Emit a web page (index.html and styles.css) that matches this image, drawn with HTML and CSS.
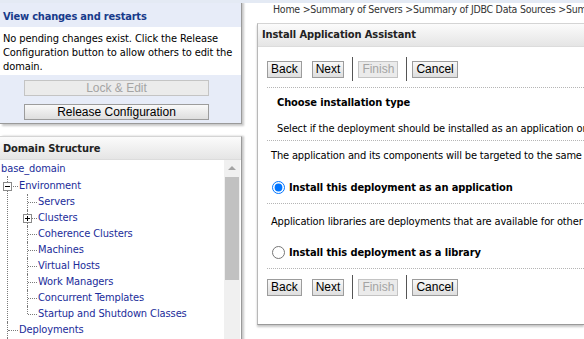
FILE: index.html
```html
<!DOCTYPE html>
<html lang="en">
<head>
    <meta charset="UTF-8">
    <title>Install Application Assistant</title>
    <link rel="stylesheet" href="styles.css">
</head>
<body>
    <div class="page">
        <div class="left-col">
            <div class="change-center">
                <h3>View changes and restarts</h3>
                <div class="cc-msg">No pending changes exist. Click the Release Configuration button to allow others to edit the domain.</div>
                <div class="cc-buttons">
                    <button class="btn wide" disabled>Lock &amp; Edit</button>
                    <button class="btn wide">Release Configuration</button>
                </div>
            </div>

            <div class="domain-panel">
                <div class="panel-head">Domain Structure</div>
                <div class="tree-wrap">
                    <div class="tree">
                        <div class="root-label">base_domain</div>
                        <ul class="lvl1">
                            <li>
                                <span class="toggle minus"></span>
                                <a href="#">Environment</a>
                                <ul class="lvl2">
                                    <li><a href="#">Servers</a></li>
                                    <li><span class="toggle plus"></span><a href="#">Clusters</a></li>
                                    <li><a href="#">Coherence Clusters</a></li>
                                    <li><a href="#">Machines</a></li>
                                    <li><a href="#">Virtual Hosts</a></li>
                                    <li><a href="#">Work Managers</a></li>
                                    <li><a href="#">Concurrent Templates</a></li>
                                    <li><a href="#">Startup and Shutdown Classes</a></li>
                                </ul>
                            </li>
                            <li><a href="#">Deployments</a></li>
                            <li><a href="#">Services</a></li>
                            <li><a href="#">Security Realms</a></li>
                        </ul>
                    </div>
                    <div class="scrollbar">
                        <div class="arrow"></div>
                        <div class="thumb"></div>
                    </div>
                </div>
            </div>
        </div>

        <div class="right-col">
            <div class="breadcrumb">
                <a href="#">Home</a> &gt;<a href="#">Summary of Servers</a> &gt;<a href="#">Summary of JDBC Data Sources</a> &gt;<a href="#">Summary of Deployments</a> &gt;Install Application Assistant
            </div>

            <div class="assistant">
                <div class="panel-head">Install Application Assistant</div>
                <div class="assistant-body">
                    <div class="button-bar">
                        <button class="btn">Back</button>
                        <button class="btn">Next</button>
                        <span class="sep"></span>
                        <button class="btn" disabled>Finish</button>
                        <span class="sep"></span>
                        <button class="btn">Cancel</button>
                    </div>

                    <div class="intro">
                        <h4>Choose installation type</h4>
                        <p>Select if the deployment should be installed as an application or a library.</p>
                    </div>

                    <p class="desc">The application and its components will be targeted to the same locations. This is the most common usage.</p>
                    <label class="choice"><input type="radio" name="kind" checked> Install this deployment as an application</label>

                    <p class="desc second">Application libraries are deployments that are available for other deployments to share.</p>
                    <label class="choice second"><input type="radio" name="kind"> Install this deployment as a library</label>

                    <div class="button-bar bottom">
                        <button class="btn">Back</button>
                        <button class="btn">Next</button>
                        <span class="sep"></span>
                        <button class="btn" disabled>Finish</button>
                        <span class="sep"></span>
                        <button class="btn">Cancel</button>
                    </div>
                </div>
            </div>
        </div>
    </div>
</body>
</html>
```

FILE: styles.css
```css
html, body {
    margin: 0;
    overflow: hidden;
}
body {
    font-family: Tahoma, "DejaVu Sans Condensed", "DejaVu Sans", sans-serif;
    font-size: 11px;
    letter-spacing: -0.1px;
    color: #000;
    background-color: #fff;
}
.page {
    display: flex;
    width: 584px;
    height: 339px;
    overflow: hidden;
    border-top: 3px solid #e4eaf4;
    box-sizing: border-box;
}
a {
    color: #1b2c9a;
    text-decoration: none;
}

/* left column */
.left-col {
    width: 247px;
    flex-shrink: 0;
    margin-top: -3px;
}
.change-center {
    width: 242px;
    height: 124px;
    background-color: #e7ecf8;
    border-top: 3px solid #eef0f4;
    border-right: 1px solid #9a9a9a;
    border-bottom: 1px solid #9a9a9a;
    box-shadow: 2px 2px 2px #c8c8c8;
    box-sizing: border-box;
}
.change-center h3 {
    margin: 0;
    padding: 7px 3px 0;
    height: 24px;
    box-sizing: border-box;
    font-size: 11px;
    line-height: 14px;
    letter-spacing: -0.2px;
    color: #183b8b;
}
.cc-msg {
    background-color: #fff;
    padding: 5px 3px 1px;
    line-height: 14px;
}
.cc-buttons {
    display: flex;
    flex-direction: column;
    align-items: center;
    gap: 8px;
    padding-top: 5px;
    padding-right: 8px;
}

.btn {
    font-family: "Liberation Sans", Arial, sans-serif;
    font-size: 12px;
    letter-spacing: 0;
    height: 17px;
    padding: 0 3px;
    border: 1px solid #9c9c9c;
    border-radius: 0;
    background: linear-gradient(#f9f9f9, #dedede);
    color: #000;
    line-height: 15px;
}
.btn:disabled {
    color: #a4a4a4;
    background: #ebebeb;
    border-color: #c4c4c4;
}
.btn.wide {
    width: 185px;
    height: 16px;
    line-height: 14px;
}

.domain-panel {
    margin-top: 12px;
    width: 242px;
    height: 230px;
    border-top: 1px solid #d4d4d4;
    border-right: 1px solid #9a9a9a;
    box-shadow: 2px 0 2px #c8c8c8;
    box-sizing: border-box;
}
.panel-head {
    height: 23px;
    line-height: 22px;
    padding-left: 3px;
    font-weight: bold;
    color: #222;
    background: linear-gradient(#fbfbfb, #e5e5e5);
    border-bottom: 1px solid #dcdcdc;
    box-sizing: border-box;
}
.domain-panel .panel-head {
    line-height: 24px;
}
.tree-wrap {
    display: flex;
}
.tree {
    flex: 1;
    line-height: 16px;
    padding: 1px 0 0 1px;
}
.root-label {
    color: #1b2c9a;
    height: 17px;
}
.tree ul {
    list-style: none;
    margin: 0;
    padding: 0;
}
.tree li {
    position: relative;
    padding-left: 12px;
    white-space: nowrap;
}
.tree li::before {
    content: "";
    position: absolute;
    left: 0;
    top: 0;
    bottom: 0;
    border-left: 1px dotted #7a7a7a;
}
.tree .lvl1 > li:first-child::before {
    top: -2px;
}
.tree li:last-child::before {
    bottom: auto;
    height: 8px;
}
.tree li::after {
    content: "";
    position: absolute;
    left: 1px;
    top: 8px;
    width: 10px;
    border-top: 1px dotted #7a7a7a;
}
.tree .lvl1 {
    margin-left: 6px;
}
.tree .lvl2 {
    margin-left: 8px;
}
.lvl2 li {
    padding-left: 11px;
}
.lvl2 li::after {
    width: 9px;
}
.toggle {
    position: absolute;
    left: -4px;
    top: 4px;
    width: 7px;
    height: 7px;
    border: 1px solid #8a8a8a;
    background: #fff;
    z-index: 1;
}
.toggle::before {
    content: "";
    position: absolute;
    left: 1px;
    top: 3px;
    width: 5px;
    height: 1px;
    background-color: #000;
}
.toggle.plus::after {
    content: "";
    position: absolute;
    left: 3px;
    top: 1px;
    width: 1px;
    height: 5px;
    background-color: #000;
}
.scrollbar {
    width: 16px;
    margin-right: 1px;
    background-color: #f0f0f0;
    height: 210px;
}
.scrollbar .arrow {
    width: 0;
    height: 0;
    margin: 6px auto 7px;
    border-left: 4px solid transparent;
    border-right: 4px solid transparent;
    border-bottom: 4px solid #a3a3a3;
}
.scrollbar .thumb {
    height: 103px;
    margin: 0 1px;
    background-color: #c1c1c1;
}

/* right column */
.right-col {
    flex: 1;
    min-width: 0;
}
.breadcrumb {
    height: 17px;
    padding-left: 26px;
    font-size: 10.5px;
    letter-spacing: -0.25px;
    line-height: 12px;
    white-space: nowrap;
    overflow: hidden;
    color: #333;
}
.breadcrumb a {
    color: #333;
}
.assistant {
    margin-left: 10px;
    margin-top: 3px;
    height: 302px;
    border-left: 1px solid #b8b8b8;
    border-top: 1px solid #d4d4d4;
    border-bottom: 1px solid #9a9a9a;
    box-shadow: 0 2px 2px #c8c8c8;
    box-sizing: border-box;
}
.assistant .panel-head {
    padding-left: 4px;
}
.assistant-body {
    padding: 10px 0 0 9px;
    white-space: nowrap;
}
.button-bar {
    display: flex;
    align-items: center;
    gap: 8px;
    height: 24px;
    padding-bottom: 6px;
    border-bottom: 1px dotted #b5b5b5;
}
.button-bar .btn:first-child {
    margin-right: 2px;
}
.sep {
    width: 1px;
    height: 24px;
    background-color: #555;
}
.button-bar .sep + .btn {
    margin-left: -3px;
}
.intro {
    padding-left: 10px;
    border-bottom: 1px dotted #b5b5b5;
}
.intro h4 {
    margin: 0;
    padding-top: 8px;
    font-size: 11px;
    line-height: 14px;
}
.intro p {
    margin: 0;
    padding: 12px 0 4px;
    line-height: 14px;
    letter-spacing: -0.15px;
}
.desc {
    margin: 0;
    padding: 8px 0 0 4px;
    line-height: 14px;
    letter-spacing: -0.15px;
}
.desc.second {
    padding-top: 11px;
}
.choice {
    display: flex;
    align-items: center;
    height: 14px;
    padding: 17px 0 9px 4px;
    font-weight: bold;
    border-bottom: 1px dotted #b5b5b5;
}
.choice.second {
    padding-top: 16px;
}
.choice input {
    margin: 0 4px 0 1px;
    width: 13px;
    height: 13px;
}
.button-bar.bottom {
    border-bottom: none;
    padding-top: 6px;
}
```
